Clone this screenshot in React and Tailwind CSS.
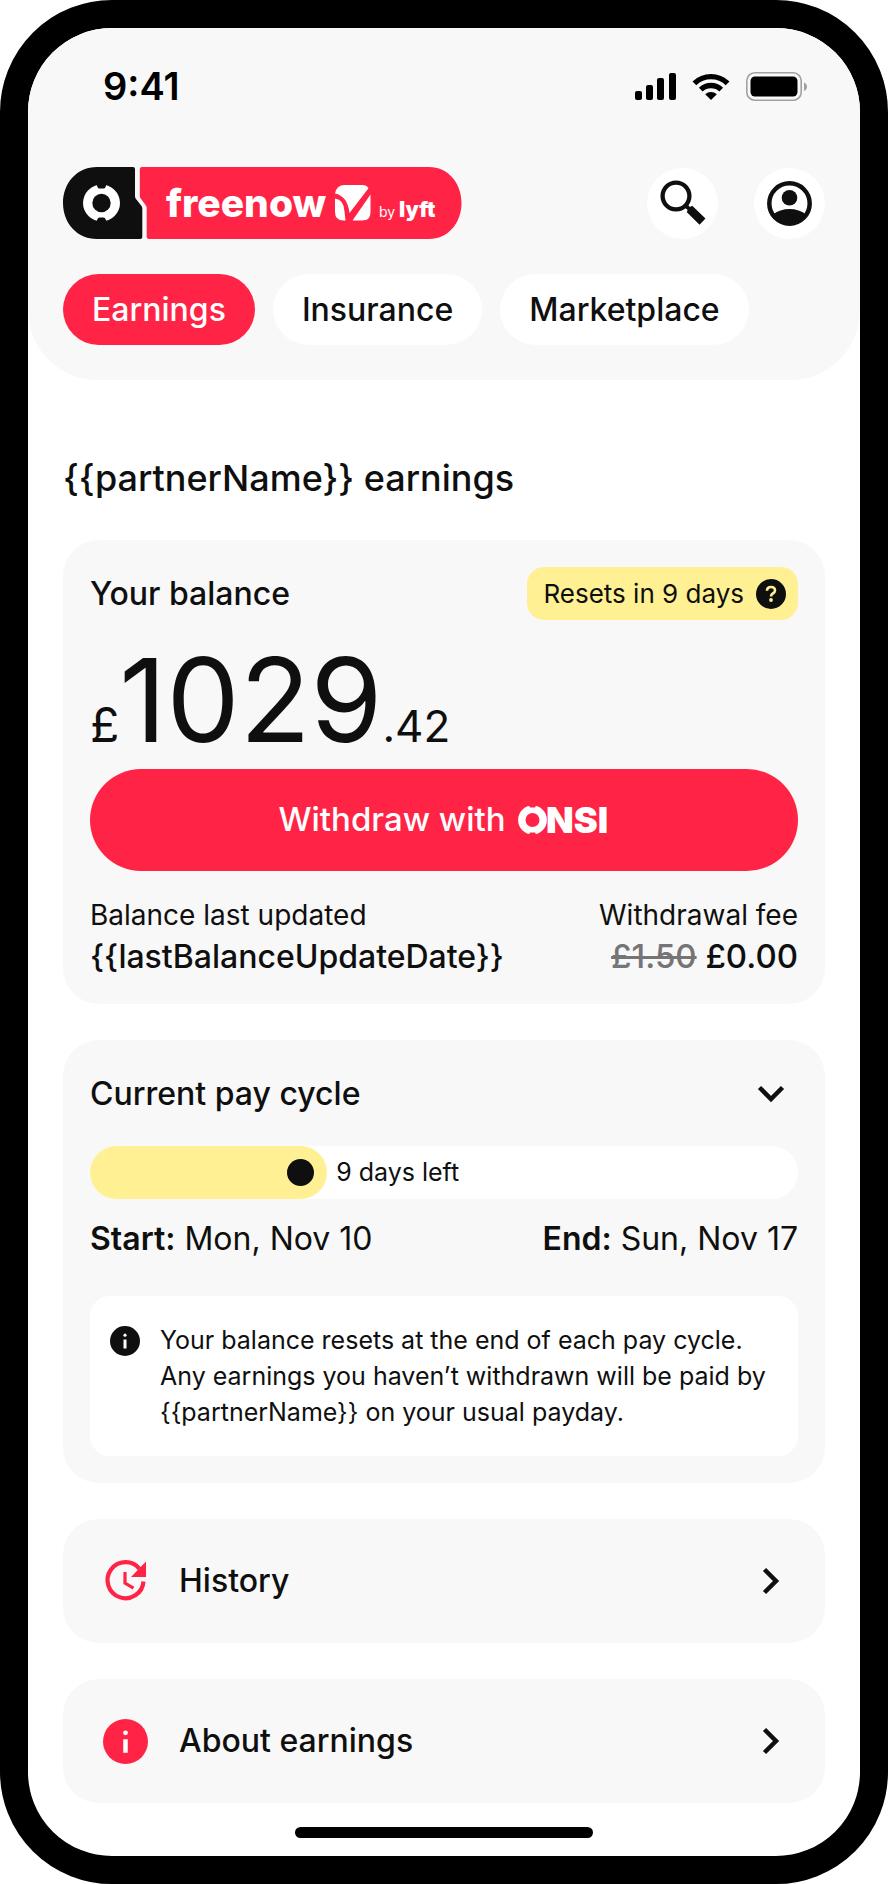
import React, { useState } from 'react';

const CellularIcon = () => (
  <svg width="41" height="27" viewBox="0 0 41 27" aria-hidden="true">
    <rect x="0" y="18" width="7" height="9" rx="2" />
    <rect x="11" y="12" width="7" height="15" rx="2" />
    <rect x="22" y="5" width="7" height="22" rx="2" />
    <rect x="34" y="0" width="7" height="27" rx="2" />
  </svg>
);

const WifiIcon = () => (
  <svg width="38" height="27" viewBox="0 0 38 27" aria-hidden="true">
    <g fill="none" stroke="#000" strokeWidth="5.4">
      <path d="M2.4 10.4A23.8 23.8 0 0 1 35.6 10.4" />
      <path d="M8.8 16.6A14.8 14.8 0 0 1 29.2 16.6" />
    </g>
    <path d="M19 27l-5.8-5.8a8.4 8.4 0 0 1 11.6 0z" />
  </svg>
);

const BatteryIcon = () => (
  <svg width="61" height="29" viewBox="0 0 61 29" aria-hidden="true">
    <rect x="0.8" y="0.8" width="54.4" height="27.4" rx="8" fill="none" stroke="#a1a1a1" strokeWidth="1.6" />
    <rect x="4.5" y="4.5" width="47" height="20" rx="4.5" />
    <path d="M58 10.5c4 1.5 4 7 0 8.5z" fill="#a1a1a1" />
  </svg>
);

const BrandLogo = () => (
  <svg width="400" height="72" viewBox="0 0 400 72" role="img" aria-label="Onsi, freenow by lyft">
    <path
      d="M34 0H70q2 0 2 2V29q0 2 1 3l5.500 7q0.800 1 0.800 3V70q0 2 -2 2H34C14 72 0 56 0 36S14 0 34 0z"
      fill="#0f0f0f"
    />
    <path
      d="M79 0H366C385 0 398.500 16 398.500 36S385 72 366 72H86q-2.300 0 -2.300 -2V41q0 -1.500 -0.800 -2.500l-5.200 -7q-0.900 -1.200 -0.900 -3V2q0 -2 2.200 -2z"
      fill="#ff2445"
    />
    <circle cx="38.500" cy="36" r="18.500" fill="#fff" />
    <circle cx="38.500" cy="36" r="9.200" fill="#0f0f0f" />
    <path d="M33 16h11l-1.500 4q-0.500 1.500 -2 1.500h-4q-1.500 0 -2 -1.500z" fill="#0f0f0f" />
    <path d="M33 56h11l-1.500 -4q-0.500 -1.500 -2 -1.500h-4q-1.500 0 -2 1.500z" fill="#0f0f0f" />
    <g fill="#fff" fontFamily="Inter, sans-serif">
      <text x="103" y="50" fontSize="39" fontWeight="800">freenow</text>
      <text x="316" y="50" fontSize="14">by</text>
      <text x="336" y="50" fontSize="21" fontWeight="900">lyft</text>
    </g>
    <g fill="#fff" transform="translate(272 18)">
      <path d="M0 8.500Q1.500 0 9.500 0H27.500Q31.500 0 33.500 3.300L14.500 28Q12.500 11 0 8.500z" />
      <path d="M0 13.500Q9 14.500 9.500 26.500L10.500 35.500H8.500Q0 35.500 0 27z" />
      <path d="M35.500 9.500V27.500Q35.500 35.500 27 35.500H17.500z" />
    </g>
  </svg>
);

const OnsiWordmark = () => (
  <svg width="92" height="54" viewBox="0 -12 92 54" role="img" aria-label="ONSI">
    <circle cx="14.500" cy="15" r="10.700" fill="none" stroke="#fff" strokeWidth="7.400" />
    <path d="M10.500 0h8l-1.500 2.600h-5zM10.500 30h8l-1.500 -2.600h-5z" fill="#ff2445" />
    <text x="28" y="28" fontSize="36" fontWeight="900" fontFamily="Inter, sans-serif" fill="#fff">NSI</text>
  </svg>
);

const SearchIcon = () => (
  <svg width="46" height="46" viewBox="0 0 46 46" aria-hidden="true">
    <circle cx="16" cy="16" r="13.4" fill="none" stroke="#0f0f0f" strokeWidth="4.3" />
    <path d="M24.500 27.500l3 -3 2.500 2.500 2.200 -1.200L45.500 38.500l-6 6.200L26.700 32l1 -2z" fill="#0f0f0f" />
  </svg>
);

const ProfileIcon = () => (
  <svg width="45" height="45" viewBox="0 0 45 45" aria-hidden="true">
    <circle cx="22.5" cy="22.5" r="20.2" fill="none" stroke="#0f0f0f" strokeWidth="4.5" />
    <circle cx="22.5" cy="16.7" r="7.8" fill="#0f0f0f" />
    <path d="M6 33.500Q13 28 22.500 28T39 33.500A20 20 0 0 1 6 33.500z" fill="#0f0f0f" />
  </svg>
);

const InfoIcon = ({ className }) => (
  <svg className={className} viewBox="0 0 30 30" aria-hidden="true">
    <circle cx="15" cy="15" r="15" fill="currentColor" />
    <circle cx="15" cy="9.2" r="1.6" fill="#fff" />
    <path d="M13.500 13.500h3v9h-3z" fill="#fff" />
  </svg>
);

const HelpIcon = () => (
  <svg width="30" height="30" viewBox="0 0 30 30" aria-hidden="true">
    <circle cx="15" cy="15" r="15" fill="#0f0f0f" />
    <path d="M11 11.800q0 -3.800 4 -3.800t4 3.500q0 1.800 -2.200 3 -1.800 1 -1.800 3" fill="none" stroke="#fff193" strokeWidth="2.6" />
    <circle cx="15" cy="21" r="1.9" fill="#fff193" />
  </svg>
);

const HistoryIcon = () => (
  <svg width="45" height="45" viewBox="0 0 45 45" fill="none" stroke="#ff2445" aria-hidden="true">
    <path d="M36.500 9.800A18 18 0 1 0 40.500 22.500" strokeWidth="4.2" />
    <path d="M43 2.500V18H28z" fill="#ff2445" stroke="none" />
    <path d="M22 13V24l8.500 5.200" strokeWidth="3.2" />
  </svg>
);

const ChevronIcon = ({ direction }) => (
  <svg
    className={direction === 'right' ? '-rotate-90' : direction === 'up' ? 'rotate-180' : ''}
    width="54"
    height="54"
    viewBox="0 0 54 54"
    aria-hidden="true"
  >
    <path d="M15.500 20.500L27 32 38.500 20.500" fill="none" stroke="#0f0f0f" strokeWidth="4.5" />
  </svg>
);

const tabs = ['Earnings', 'Insurance', 'Marketplace'];

const cycle = { start: 'Mon, Nov 10', end: 'Sun, Nov 17', daysLeft: 9, progress: 33.5 };

const StatusBar = () => (
  <div className="flex items-center justify-between pr-[18px] pl-10 text-black">
    <span className="text-[38px] leading-[40px] font-semibold">9:41</span>
    <div className="flex items-center gap-4">
      <CellularIcon />
      <WifiIcon />
      <BatteryIcon />
    </div>
  </div>
);

const BalanceCard = () => (
  <section className="rounded-[36px] bg-[#f8f8f8] p-[27px]">
    <div className="flex items-center justify-between">
      <h2 className="text-[32px] leading-[40px] font-medium">Your balance</h2>
      <button type="button" className="flex h-[53px] items-center gap-3 rounded-[17px] bg-[#fff193] pr-3 pl-4 text-[26px]">
        Resets in {cycle.daysLeft} days
        <HelpIcon />
      </button>
    </div>
    <p className="mt-5 mb-2 flex h-[121px] items-baseline leading-[121px]">
      <span className="text-[48px]">£</span>
      <span className="text-[116px]">1029</span>
      <span className="text-[44px]">.42</span>
    </p>
    <button type="button" className="flex h-[102px] w-full items-center justify-center gap-3 rounded-full bg-[#ff2445] text-[33px] font-medium text-white">
      Withdraw with
      <OnsiWordmark />
    </button>
    <dl className="mt-6 flex justify-between leading-[41px]">
      <div>
        <dt className="text-[28px]">Balance last updated</dt>
        <dd className="text-[32px] font-medium">{'{{lastBalanceUpdateDate}}'}</dd>
      </div>
      <div className="text-right">
        <dt className="text-[28px]">Withdrawal fee</dt>
        <dd className="text-[33px] font-medium">
          <s className="text-[#757575]">£1.50</s> £0.00
        </dd>
      </div>
    </dl>
  </section>
);

const PayCycleCard = () => {
  const [open, setOpen] = useState(true);

  return (
    <section className="rounded-[36px] bg-[#f8f8f8] p-[27px]">
      <h2>
        <button
          type="button"
          aria-expanded={open}
          onClick={() => setOpen(!open)}
          className="flex w-full items-center justify-between text-[32px] font-medium"
        >
          Current pay cycle
          <ChevronIcon direction={open ? 'down' : 'up'} />
        </button>
      </h2>
      {open && (
        <>
          <div className="mt-[25px] flex h-[53px] items-center rounded-full bg-white">
            <div
              className="flex h-full items-center justify-end rounded-full bg-[#fff193] pr-[13px]"
              style={{ width: `${cycle.progress}%` }}
            >
              <span className="size-[27px] rounded-full bg-[#0f0f0f]" />
            </div>
            <span className="ml-[9px] text-[25px]">{cycle.daysLeft} days left</span>
          </div>
          <div className="mt-5 flex justify-between text-[32px] leading-[40px]">
            <p>
              <strong className="font-semibold">Start:</strong> {cycle.start}
            </p>
            <p>
              <strong className="font-semibold">End:</strong> {cycle.end}
            </p>
          </div>
          <div className="mt-[37px] flex gap-5 rounded-[20px] bg-white px-5 py-[26px]">
            <InfoIcon className="mt-1 size-[30px] shrink-0" />
            <p className="text-[25px] leading-[36px]">
              Your balance resets at the end of each pay cycle. Any earnings you haven’t withdrawn will be paid by{' '}
              {'{{partnerName}}'} on your usual payday.
            </p>
          </div>
        </>
      )}
    </section>
  );
};

const LinkCard = ({ icon, label }) => (
  <a href="#" className="flex h-[124px] items-center gap-[31px] rounded-[36px] bg-[#f8f8f8] pr-[27px] pl-10">
    {icon}
    <span className="grow text-[32px] font-medium">{label}</span>
    <ChevronIcon direction="right" />
  </a>
);

const App = () => {
  const [activeTab, setActiveTab] = useState('Earnings');

  return (
    <div className="min-h-screen overflow-hidden rounded-[112px] border-[28px] border-black bg-white font-['Inter',sans-serif] text-[#0f0f0f]">
      <header className="rounded-b-[70px] bg-[#f8f8f8] px-[35px] pt-[38px] pb-[35px]">
        <StatusBar />
        <div className="mt-[61px] flex items-center justify-between">
          <BrandLogo />
          <div className="flex gap-9">
            <button type="button" aria-label="Search" className="flex size-[71px] items-center justify-center rounded-full bg-white">
              <SearchIcon />
            </button>
            <button type="button" aria-label="Profile" className="flex size-[71px] items-center justify-center rounded-full bg-white">
              <ProfileIcon />
            </button>
          </div>
        </div>
        <nav className="mt-[35px] flex gap-[18px]">
          {tabs.map((tab) => (
            <button
              key={tab}
              type="button"
              onClick={() => setActiveTab(tab)}
              className={`h-[71px] rounded-full px-[29px] text-[32px] font-medium ${
                tab === activeTab ? 'bg-[#ff2445] text-white' : 'bg-white'
              }`}
            >
              {tab}
            </button>
          ))}
        </nav>
      </header>

      <main className="px-[35px] pt-[78px]">
        <h1 className="text-[36px] leading-[40px] font-medium">{'{{partnerName}}'} earnings</h1>
        <div className="mt-[42px] flex flex-col gap-9">
          <BalanceCard />
          <PayCycleCard />
          <LinkCard icon={<HistoryIcon />} label="History" />
          <LinkCard icon={<InfoIcon className="size-[45px] text-[#ff2445]" />} label="About earnings" />
        </div>
      </main>

      {/* Home indicator */}
      <div className="mx-auto mt-6 mb-[18px] h-[11px] w-[298px] rounded-full bg-black" />
    </div>
  );
};

export default App;
